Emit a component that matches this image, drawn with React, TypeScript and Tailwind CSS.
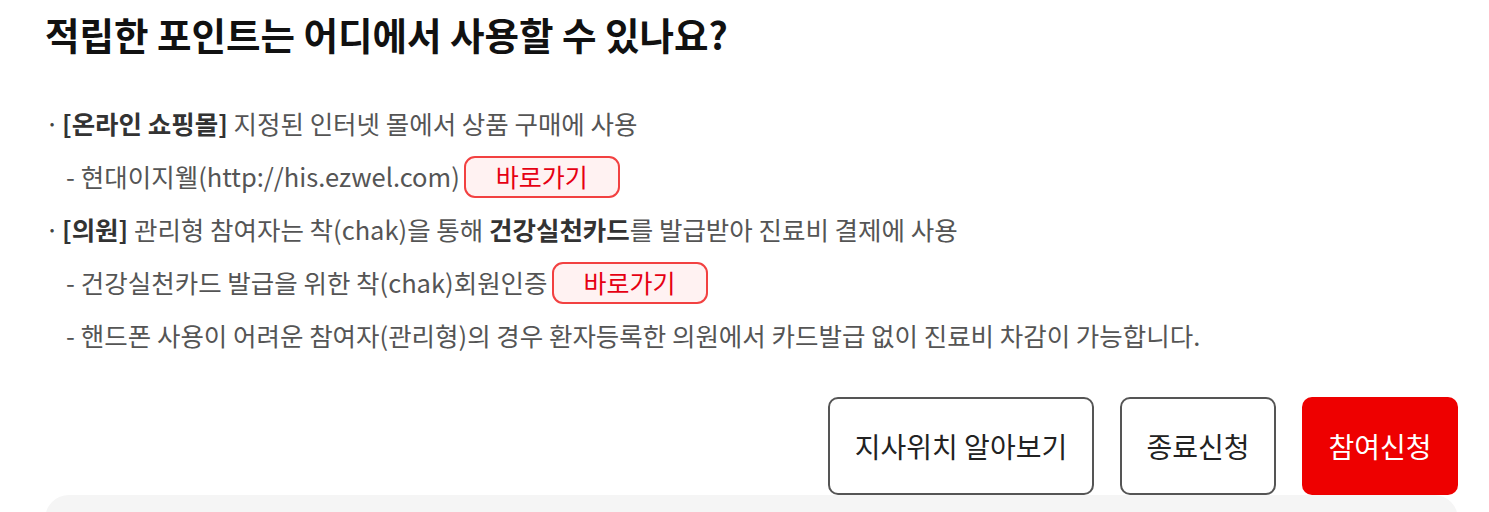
import React from 'react';

const font = "font-['Noto_Sans_CJK_KR','Noto_Sans',sans-serif]";

function GoButton() {
  return (
    <button className="ml-[4px] flex h-[42px] w-[156px] items-center justify-center rounded-[11px] border-2 border-[#f24141] bg-[#fff2f2] text-[25px] text-[#e60012]">
      바로가기
    </button>
  );
}

function Bullet({ children }: { children: React.ReactNode }) {
  return (
    <li className="flex h-[53px] items-center">
      <span className="w-[17px] text-[#444]">·</span>
      <span>{children}</span>
    </li>
  );
}

function Sub({ children }: { children: React.ReactNode }) {
  return (
    <li className="flex h-[53px] items-center pl-[21px]">
      <span className="mr-[6px] text-[#555]">-</span>
      {children}
    </li>
  );
}

export default function App() {
  return (
    <div className={`${font} bg-white pl-[45px] pr-[31px] pt-[12px] text-[#555]`}>
      <h2 className="whitespace-nowrap text-[37.5px] font-bold leading-[44px] text-[#111]">
        적립한 포인트는 어디에서 사용할 수 있나요?
      </h2>

      <ul className="mt-[41px] whitespace-nowrap text-[25.5px]">
        <Bullet>
          <b className="font-bold text-[#333]">[온라인 쇼핑몰]</b> 지정된 인터넷 몰에서 상품 구매에 사용
        </Bullet>
        <Sub>
          <span>현대이지웰(http://his.ezwel.com)</span>
          <GoButton />
        </Sub>
        <Bullet>
          <b className="font-bold text-[#333]">[의원]</b> 관리형 참여자는 착(chak)을 통해{' '}
          <b className="font-bold text-[#333]">건강실천카드</b>를 발급받아 진료비 결제에 사용
        </Bullet>
        <Sub>
          <span>건강실천카드 발급을 위한 착(chak)회원인증</span>
          <GoButton />
        </Sub>
        <Sub>
          <span>핸드폰 사용이 어려운 참여자(관리형)의 경우 환자등록한 의원에서 카드발급 없이 진료비 차감이 가능합니다.</span>
        </Sub>
      </ul>

      <div className="mt-[35px] flex justify-end gap-[26px]">
        <button className="h-[98px] w-[266px] rounded-[10px] border-2 border-[#555] bg-white text-[28px] text-[#222]">
          지사위치 알아보기
        </button>
        <button className="h-[98px] w-[156px] rounded-[10px] border-2 border-[#555] bg-white text-[28px] text-[#222]">
          종료신청
        </button>
        <button className="h-[98px] w-[156px] rounded-[10px] bg-[#ee0000] text-[28px] text-white">
          참여신청
        </button>
      </div>

      <div className="h-[40px] rounded-tl-[24px] rounded-tr-[24px] bg-[#f5f5f5]" />
    </div>
  );
}
